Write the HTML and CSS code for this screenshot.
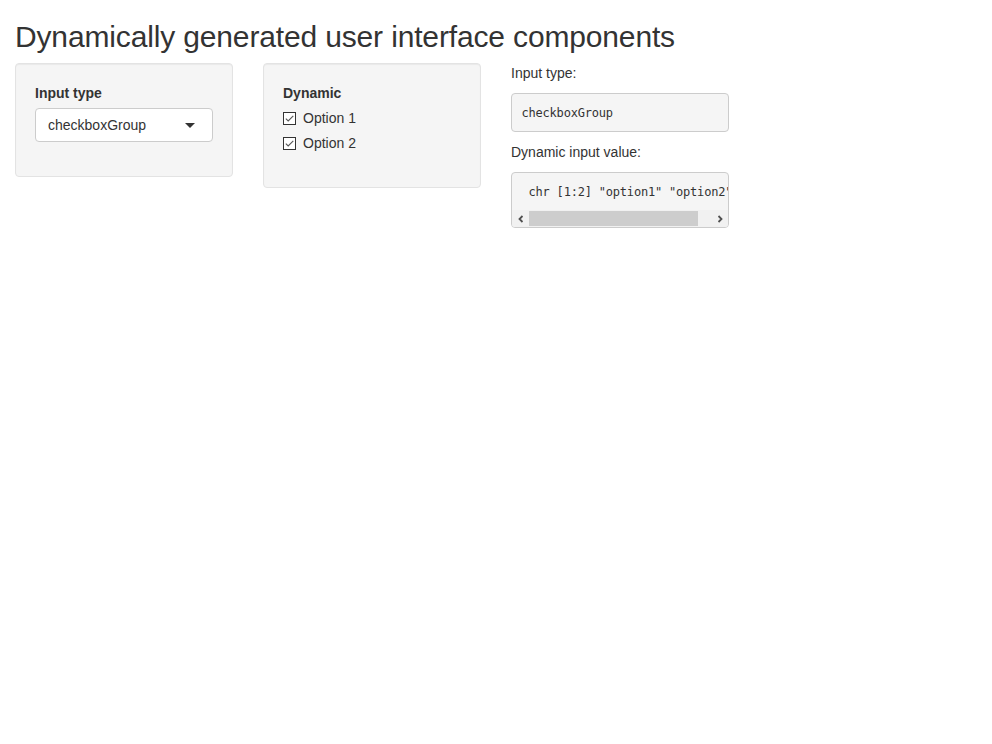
FILE: index.html
```html
<!DOCTYPE html>
<html>
<head>
<meta charset="utf-8">
<title>Dynamic UI</title>
<link rel="stylesheet" href="styles.css">
</head>
<body>
<div class="container">
  <h2 class="title">Dynamically generated user interface components</h2>
  <div class="row">
    <div class="well">
      <div class="form-group">
        <label class="control-label">Input type</label>
        <div class="select">
          <span class="select-text">checkboxGroup</span>
          <span class="caret"></span>
        </div>
      </div>
    </div>
    <div class="well">
      <div class="form-group">
        <label class="control-label">Dynamic</label>
        <div class="options">
          <div class="checkbox">
            <svg class="cb" width="13" height="13" viewBox="0 0 13 13"><rect x="0.5" y="0.5" width="12" height="12" fill="#fff" stroke="#333"/><polyline points="2.8,6.6 5.2,9 10.3,3.9" fill="none" stroke="#555" stroke-width="1.1"/></svg>
            <span>Option 1</span>
          </div>
          <div class="checkbox">
            <svg class="cb" width="13" height="13" viewBox="0 0 13 13"><rect x="0.5" y="0.5" width="12" height="12" fill="#fff" stroke="#333"/><polyline points="2.8,6.6 5.2,9 10.3,3.9" fill="none" stroke="#555" stroke-width="1.1"/></svg>
            <span>Option 2</span>
          </div>
        </div>
      </div>
    </div>
    <div class="output-col">
      <div class="out-label">Input type:</div>
      <pre class="pre">checkboxGroup</pre>
      <div class="out-label">Dynamic input value:</div>
      <div class="pre-scroll">
        <div class="pre-text"> chr [1:2] "option1" "option2"</div>
        <div class="scrollbar">
          <span class="sb-btn"><svg width="8" height="8" viewBox="0 0 8 8"><polyline points="5.5,1 2.5,4 5.5,7" fill="none" stroke="#505050" stroke-width="1.8"/></svg></span>
          <span class="sb-track"><span class="sb-thumb"></span></span>
          <span class="sb-btn"><svg width="8" height="8" viewBox="0 0 8 8"><polyline points="2.5,1 5.5,4 2.5,7" fill="none" stroke="#505050" stroke-width="1.8"/></svg></span>
        </div>
      </div>
    </div>
  </div>
</div>
</body>
</html>
```
FILE: styles.css
```css
html, body {
  margin: 0;
  padding: 0;
  background: #fff;
}
body {
  font-family: "Liberation Sans", Arial, sans-serif;
  font-size: 14px;
  line-height: 20px;
  color: #333;
}
.container {
  padding: 0 15px;
}
.title {
  font-size: 30px;
  font-weight: 500;
  line-height: 33px;
  letter-spacing: -0.15px;
  margin: 20px 0 10px;
}
.row {
  display: grid;
  grid-template-columns: 218px 218px 218px;
  column-gap: 30px;
  align-items: start;
}
.well {
  background: #f5f5f5;
  border: 1px solid #e3e3e3;
  border-radius: 4px;
  box-shadow: inset 0 1px 1px rgba(0, 0, 0, 0.05);
  padding: 19px;
}
.form-group {
  margin-bottom: 15px;
}
.control-label {
  display: block;
  font-weight: 700;
  line-height: 20px;
  margin-bottom: 5px;
}
.select {
  height: 34px;
  box-sizing: border-box;
  background: #fff;
  border: 1px solid #ccc;
  border-radius: 4px;
  display: flex;
  align-items: center;
  justify-content: space-between;
  padding: 0 17px 0 12px;
}
.caret {
  width: 0;
  height: 0;
  border-style: solid;
  border-width: 5px 5px 0 5px;
  border-color: #333 transparent transparent transparent;
  margin-top: 1px;
}
.options {
  display: flex;
  flex-direction: column;
  gap: 5px;
}
.checkbox {
  display: flex;
  align-items: center;
  height: 20px;
  gap: 7px;
}
.cb {
  display: block;
  margin-top: 1px;
}
.output-col {
  display: flex;
  flex-direction: column;
}
.out-label {
  line-height: 20px;
  margin-bottom: 10px;
}
.pre {
  margin: 0 0 10px;
  padding: 9.5px;
  font-family: "DejaVu Sans Mono", monospace;
  font-size: 12px;
  letter-spacing: -0.2px;
  line-height: 18px;
  background: #f5f5f5;
  border: 1px solid #ccc;
  border-radius: 4px;
  color: #333;
}
.pre-scroll {
  background: #f5f5f5;
  border: 1px solid #ccc;
  border-radius: 4px;
  overflow: hidden;
}
.pre-text {
  padding: 9.5px 0 9.5px 9.5px;
  font-family: "DejaVu Sans Mono", monospace;
  font-size: 12px;
  letter-spacing: -0.2px;
  line-height: 18px;
  white-space: pre;
  overflow: hidden;
  color: #333;
}
.scrollbar {
  display: flex;
  height: 17px;
  background: #f1f1f1;
}
.sb-btn {
  width: 17px;
  display: flex;
  align-items: center;
  justify-content: center;
}
.sb-track {
  flex: 1;
  display: flex;
  padding: 1px 0;
}
.sb-thumb {
  width: 169px;
  background: #cdcdcd;
}
```
